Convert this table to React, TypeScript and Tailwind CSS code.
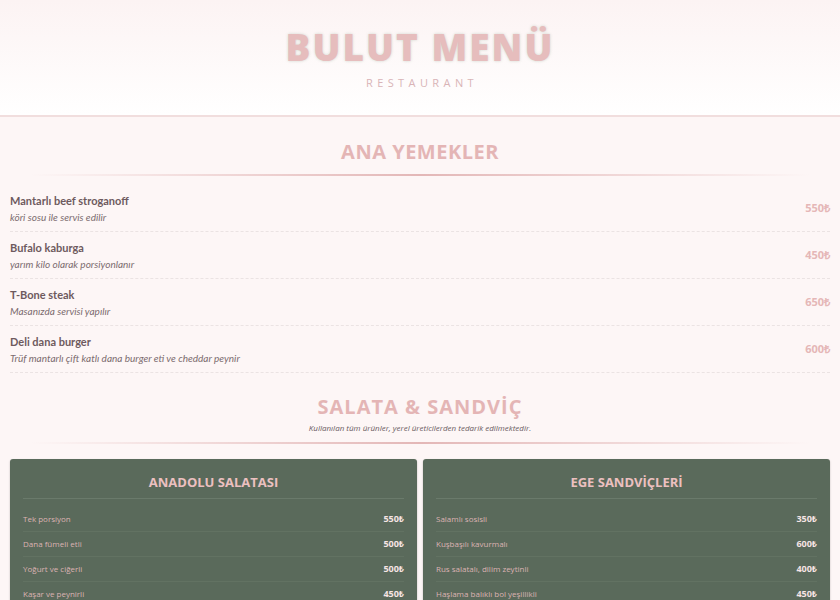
import React from "react";

const mains = [
  { name: "Mantarlı beef stroganoff", desc: "köri sosu ile servis edilir", price: "550₺" },
  { name: "Bufalo kaburga", desc: "yarım kilo olarak porsiyonlanır", price: "450₺" },
  { name: "T-Bone steak", desc: "Masanızda servisi yapılır", price: "650₺" },
  { name: "Deli dana burger", desc: "Trüf mantarlı çift katlı dana burger eti ve cheddar peynir", price: "600₺" },
];

const cards = [
  {
    title: "ANADOLU SALATASI",
    items: [
      ["Tek porsiyon", "550₺"],
      ["Dana fümeli etli", "500₺"],
      ["Yoğurt ve ciğerli", "500₺"],
      ["Kaşar ve peynirli", "450₺"],
    ],
  },
  {
    title: "EGE SANDVİÇLERİ",
    items: [
      ["Salamlı sosisli", "350₺"],
      ["Kuşbaşılı kavurmalı", "600₺"],
      ["Rus salatalı, dilim zeytinli", "400₺"],
      ["Haşlama balıklı bol yeşillikli", "450₺"],
    ],
  },
];

function SectionLine() {
  return (
    <div className="mx-[20px] h-[2px] bg-gradient-to-r from-transparent via-[#e3b7b7] to-transparent" />
  );
}

export default function App() {
  return (
    <div
      className="min-h-[600px] w-[840px] overflow-hidden bg-[#fdf6f6]"
      style={{ fontFamily: '"Open Sans", "Noto Sans", sans-serif' }}
    >
      {/* Header */}
      <header className="flex h-[117px] flex-col items-center border-b-2 border-[#f1dede] bg-gradient-to-b from-[#fcf3f3] to-white">
        <h1
          className="mt-[26px] text-[37px] font-extrabold leading-[42px] tracking-[2px] text-[#e6bdbd]"
          style={{ textShadow: "0 0 3px rgba(150,170,150,0.45)" }}
        >
          BULUT MENÜ
        </h1>
        <p className="mt-[7px] pl-[4px] text-[11px] tracking-[4.4px] text-[#d9b4b7]">RESTAURANT</p>
      </header>

      {/* Ana yemekler */}
      <section className="px-[10px]">
        <h2 className="mt-[21px] text-center text-[20px] font-bold leading-[28px] tracking-[0.5px] text-[#e4b5b5]">
          ANA YEMEKLER
        </h2>
        <div className="mt-[8px]">
          <SectionLine />
        </div>
        <div className="mt-[9px]" style={{ fontFamily: 'Lato, "Open Sans", sans-serif' }}>
          {mains.map((m) => (
            <div
              key={m.name}
              className="flex h-[47px] items-center justify-between border-b border-dashed border-[#ebe3e3]"
            >
              <div className="flex flex-col">
                <span className="text-[11px] font-bold leading-[18px] text-[#6e5a5e]">{m.name}</span>
                <span className="text-[10px] italic leading-[15px] text-[#7b6b6e]">{m.desc}</span>
              </div>
              <span
                className="text-[11px] font-bold text-[#e5b7b7]"
                style={{ fontFamily: '"Open Sans", sans-serif' }}
              >
                {m.price}
              </span>
            </div>
          ))}
        </div>

        {/* Salata & sandviç */}
        <h2 className="mt-[20px] text-center text-[20px] font-bold leading-[28px] tracking-[1px] text-[#e4b5b5]">
          SALATA &amp; SANDVİÇ
        </h2>
        <p className="mt-[1px] text-center text-[8px] italic text-[#6a5a5e]">
          Kullanılan tüm ürünler, yerel üreticilerden tedarik edilmektedir.
        </p>
        <div className="mt-[8px]">
          <SectionLine />
        </div>

        <div className="mt-[15px] grid grid-cols-2 gap-[6px]">
          {cards.map((c) => (
            <div key={c.title} className="rounded-[3px] bg-[#5a6a5b] px-[13px] pb-[10px] shadow-[0_1px_2px_rgba(0,0,0,0.25)]">
              <h3 className="pt-[13px] pb-[6px] text-center text-[13px] font-bold leading-[20px] text-[#ecc0c0]">
                {c.title}
              </h3>
              <div className="border-t border-[#6a7a6b]" />
              <div className="mt-[8px]">
                {c.items.map(([n, p]) => (
                  <div
                    key={n}
                    className="flex h-[25px] items-center justify-between border-b border-[#627262]"
                  >
                    <span className="text-[8px] text-[#dcb3b3]">{n}</span>
                    <span className="text-[9px] font-bold text-[#f6e4e4]">{p}</span>
                  </div>
                ))}
              </div>
            </div>
          ))}
        </div>
      </section>
    </div>
  );
}
